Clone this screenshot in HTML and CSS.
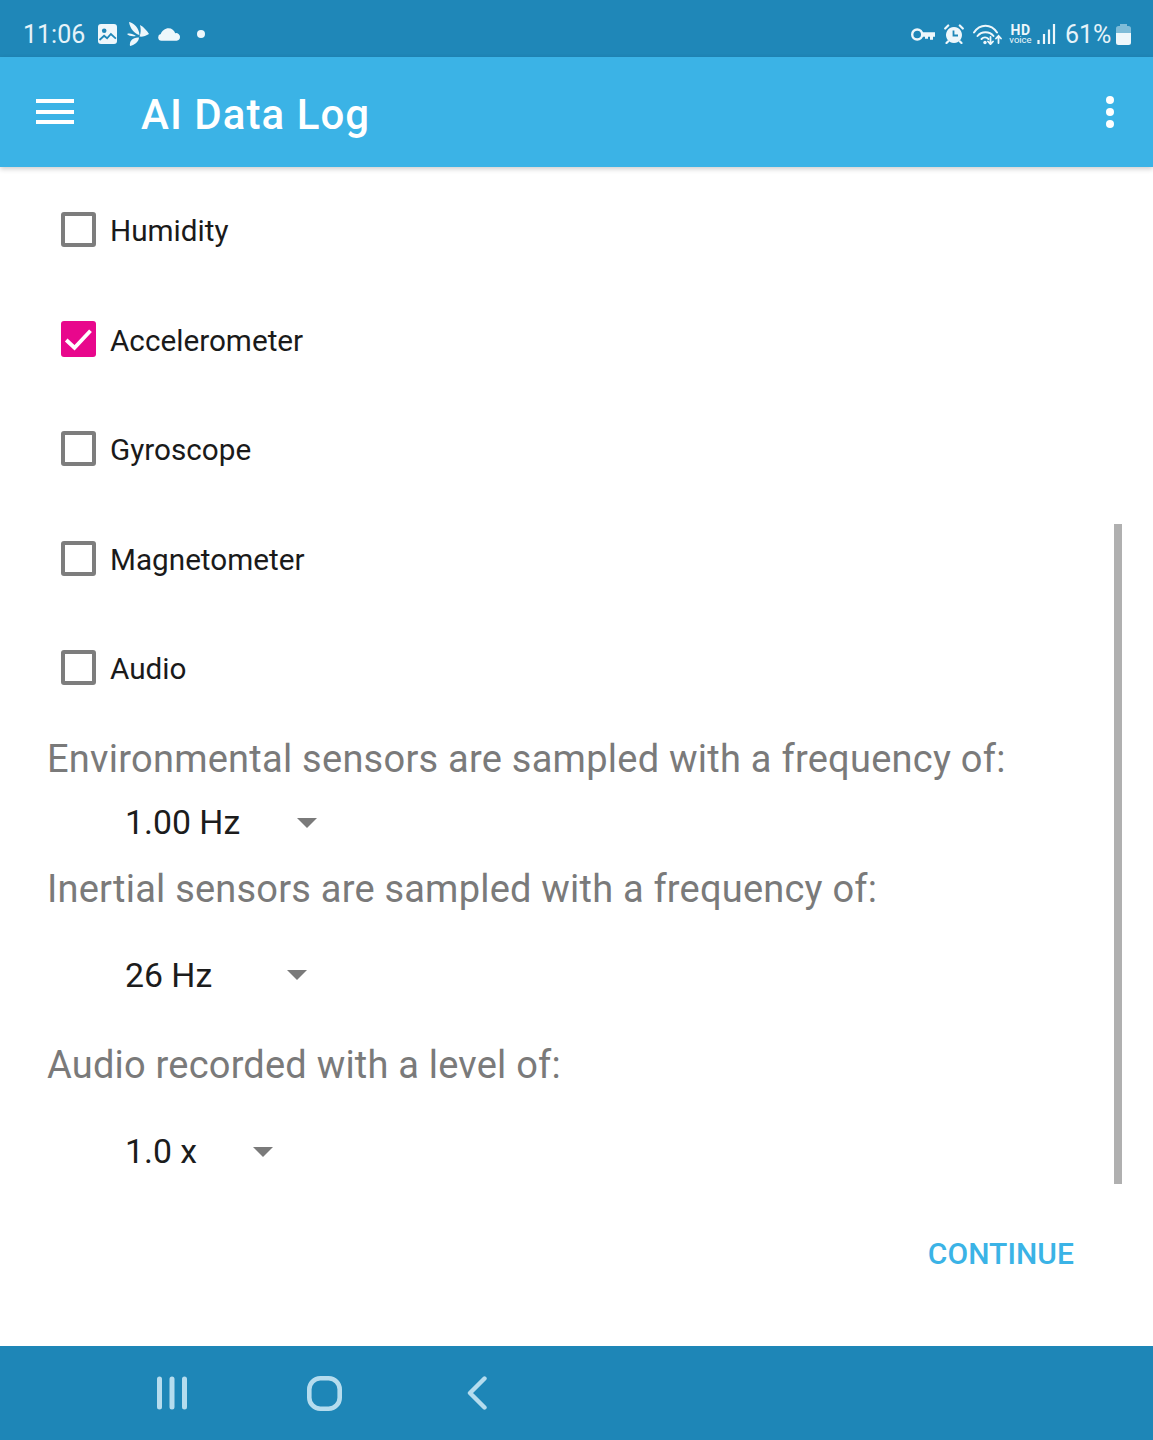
FILE: index.html
```
<!DOCTYPE html>
<html lang="en">
<head>
<meta charset="utf-8">
<title>AI Data Log</title>
<link rel="stylesheet" href="styles.css">
</head>
<body>
<div class="app">
  <header class="status">
    <div class="status-left">
      <span class="clock">11:06</span>
      <svg class="i-img" width="19" height="20" viewBox="0 0 19 20"><rect width="19" height="20" rx="3" fill="#eef7fb"/><circle cx="6.200" cy="6.800" r="2.300" fill="#1f87b8"/><path d="M1.500 16l4.600-4.200 3 2.500 3.800-4.300 5 4.600" fill="none" stroke="#1f87b8" stroke-width="1.800"/></svg>
      <svg class="i-pin" width="22" height="24" viewBox="0 0 22 24"><g fill="#eef7fb"><path d="M2 0C7 1 12 6 12.500 13C8 12 3 7 2 0z"/><path d="M13 3C17 5 20 9 22 12C19 14 15 15 12.500 14.500C14 11 14 7 13 3z"/><path d="M0 12C3 11 6 12 9 14C5 14.500 2 14 0 12z"/><path d="M3 24C2 19 6 15 12 15.500C12 19 8 23 3 24z"/></g></svg>
      <svg class="i-cloud" width="22" height="13" viewBox="0 0 23 13"><path fill="#eef7fb" d="M3.500 13a3.500 3.500 0 0 1-.6-6.900C4 2.500 7.500 0 11 0c3.500 0 6 2.200 7 5.200A4 4 0 0 1 23 9.200 3.800 3.800 0 0 1 19.500 13z"/></svg>
      <span class="dot-note"></span>
    </div>
    <div class="status-right">
      <svg class="i-key" width="24" height="13" viewBox="0 0 24 13"><circle cx="6.200" cy="6.500" r="5" fill="none" stroke="#eef7fb" stroke-width="2.400"/><path fill="#eef7fb" d="M10.500 4.200h13.500v4.600h-2v3h-3v-3h-2v2h-3v-2h-3.500z"/></svg>
      <svg class="i-alarm" width="20" height="20" viewBox="0 0 20 20"><path fill="#eef7fb" d="M10 3a8 8 0 1 1-.01 0z"/><path d="M9.500 6.500v5h4.500" fill="none" stroke="#1f87b8" stroke-width="1.800"/><path stroke="#eef7fb" stroke-width="2.200" stroke-linecap="round" d="M1.200 4.500l3-3M18.800 4.500l-3-3M4 17.500l-1.500 1.500M16 17.500l1.500 1.500"/></svg>
      <svg class="i-wifi" width="29" height="21" viewBox="0 0 29 21"><g fill="none" stroke="#eef7fb" stroke-width="2" stroke-linecap="round"><path d="M1 8.500c6-9 17-9 23 0"/><path d="M4.500 12c4-5 12-5 16 0"/><path d="M8.500 15c2-2 5-2 7 0"/><path stroke-width="1.800" d="M17.500 13v7M15 17.500l2.500 2.700 2.500-2.700M25.500 19v-7M23 14.500l2.500-2.700 2.500 2.700"/></g><circle cx="12" cy="18.500" r="1.700" fill="#eef7fb"/></svg>
      <div class="hd"><b>HD</b><span>voice</span></div>
      <svg class="i-sig" width="19" height="20" viewBox="0 0 19 20"><path stroke="#eef7fb" stroke-width="2.200" d="M1.500 16v4M7 10v10M12 5.500v14.500M17 0v20"/></svg>
      <span class="pct">61%</span>
      <svg class="i-bat" width="15" height="21" viewBox="0 0 15 21"><path fill="#7fbcd8" d="M4 0h7v2h1.500A2.500 2.500 0 0 1 15 4.500V9H0V4.500A2.500 2.500 0 0 1 2.500 2H4z"/><path fill="#eef7fb" d="M0 9h15v9.500a2.500 2.500 0 0 1-2.500 2.500h-10A2.500 2.500 0 0 1 0 18.500z"/></svg>
    </div>
  </header>

  <div class="appbar">
    <div class="burger"><i></i><i></i><i></i></div>
    <h1 class="title">AI Data Log</h1>
    <div class="kebab"><i></i><i></i><i></i></div>
  </div>

  <main class="content">
    <div class="checks">
      <div class="row"><span class="box"></span><span class="lbl">Humidity</span></div>
      <div class="row"><span class="box on"><svg width="35" height="36" viewBox="0 0 35 36"><path fill="none" stroke="#fff" stroke-width="3.800" d="M5.200 19l8.300 7.700 16-17"/></svg></span><span class="lbl">Accelerometer</span></div>
      <div class="row"><span class="box"></span><span class="lbl">Gyroscope</span></div>
      <div class="row"><span class="box"></span><span class="lbl">Magnetometer</span></div>
      <div class="row"><span class="box"></span><span class="lbl">Audio</span></div>
    </div>
    <p class="q q1">Environmental sensors are sampled with a frequency of:</p>
    <div class="sel s1"><span>1.00 Hz</span><i class="caret"></i></div>
    <p class="q q2">Inertial sensors are sampled with a frequency of:</p>
    <div class="sel s2"><span>26 Hz</span><i class="caret"></i></div>
    <p class="q q3">Audio recorded with a level of:</p>
    <div class="sel s3"><span>1.0 x</span><i class="caret"></i></div>
    <div class="thumb"></div>
    <div class="actions"><span class="cont">CONTINUE</span></div>
  </main>

  <footer class="nav">
    <svg class="n-recent" width="30" height="34" viewBox="0 0 30 34"><path fill="none" stroke="#b5dcee" stroke-width="5" stroke-linecap="round" d="M2.500 3v28M15 3v28M27.500 3v28"/></svg>
    <svg class="n-home" width="35" height="35" viewBox="0 0 35 35"><rect x="2.300" y="2.300" width="30.400" height="30.400" rx="11" fill="none" stroke="#b5dcee" stroke-width="4.600"/></svg>
    <svg class="n-back" width="20" height="34" viewBox="0 0 20 34"><path fill="none" stroke="#b5dcee" stroke-width="4.400" stroke-linecap="round" stroke-linejoin="round" d="M17.500 2.500L3 17l14.500 14.500"/></svg>
  </footer>
</div>
</body>
</html>
```
FILE: styles.css
```
* { box-sizing: border-box; }
html, body { margin: 0; padding: 0; background: #fff; }
body { font-family: Roboto, "Liberation Sans", sans-serif; }
.app { width: 1153px; height: 1440px; display: flex; flex-direction: column; overflow: hidden; }
.status { height: 57px; background: #1f87b8; display: flex; justify-content: space-between; align-items: center; padding: 11px 22px 0 23px; color: #e6f3f9; flex: none; }
.status-left, .status-right { display: flex; align-items: center; }
.status svg { display: block; flex: none; }
.clock { font-size: 25px; width: 63px; margin-right: 12px; white-space: nowrap; }
.i-img { margin-right: 10px; }
.i-pin { margin-right: 9px; }
.dot-note { width: 8px; height: 8px; border-radius: 50%; background: #eef7fb; margin-left: 17px; }
.i-key, .i-alarm { margin-right: 9px; }
.i-wifi { margin-right: 8px; }
.hd { display: flex; flex-direction: column; align-items: center; color: #eef7fb; width: 21px; margin-right: 6px; }
.hd b { font-size: 14px; line-height: 11px; font-weight: 700; letter-spacing: .5px; }
.hd span { font-size: 9.500px; line-height: 8px; }
.i-sig { margin-right: 9px; }
.pct { font-size: 25px; width: 45px; margin-right: 6px; white-space: nowrap; }
.appbar { height: 110px; background: #3bb3e6; display: flex; align-items: center; flex: none; position: relative; padding: 0 39px 0 36px; box-shadow: 0 2px 5px rgba(0,0,0,.2); z-index: 1; }
.burger { width: 38px; display: flex; flex-direction: column; gap: 6.500px; margin-top: -1px; }
.burger i { display: block; height: 4px; background: #fff; }
.title { margin: 5px 0 0 67px; font-size: 42px; letter-spacing: 1.050px; font-weight: 500; color: #fff; flex: 1; line-height: 1; }
.kebab { display: flex; flex-direction: column; gap: 4px; }
.kebab i { display: block; width: 8px; height: 8px; border-radius: 50%; background: #fff; }
.content { flex: 1; position: relative; padding: 8px 0 0 47px; }
.row { height: 109.500px; display: flex; align-items: center; padding-left: 13.500px; }
.box { width: 35px; height: 35px; border: 4px solid #7d7d7d; border-radius: 3px; flex: none; display: block; }
.box.on { background: #e8078c; border: 0; height: 36px; }
.box.on svg { display: block; }
.lbl { font-size: 29.700px; color: #1a1a1a; margin: 2px 0 0 14.500px; }
.q { margin: 0; font-size: 38px; letter-spacing: .25px; color: #7a7a7a; line-height: 50px; }
.q1 { margin-top: 11px; }
.q2, .q3 { letter-spacing: .21px; }
.sel { display: flex; align-items: center; padding-left: 78px; font-size: 33.800px; color: #1c1c1c; }
.s1 { height: 80px; padding-bottom: 2px; }
.s2 { height: 126px; padding-bottom: 3px; }
.s3 { height: 127px; padding-bottom: 3px; }
.sel span { display: block; }
.caret { display: block; width: 0; height: 0; border-left: 10px solid transparent; border-right: 10px solid transparent; border-top: 10px solid #7a7a7a; margin-left: 57px; }
.s2 .caret { margin-left: 75px; }
.s3 .caret { margin-left: 56px; }
.thumb { position: absolute; right: 31px; top: 357px; width: 8px; height: 660px; background: #b0b0b0; }
.actions { display: flex; justify-content: flex-end; padding: 19px 79px 0 0; }
.cont { font-size: 30px; font-weight: 500; letter-spacing: .05px; color: #3bb3e6; }
.nav { height: 94px; flex: none; background: #1e86b7; display: flex; align-items: center; padding-left: 157px; gap: 120px; }
.n-back { margin-left: 5px; }
```
